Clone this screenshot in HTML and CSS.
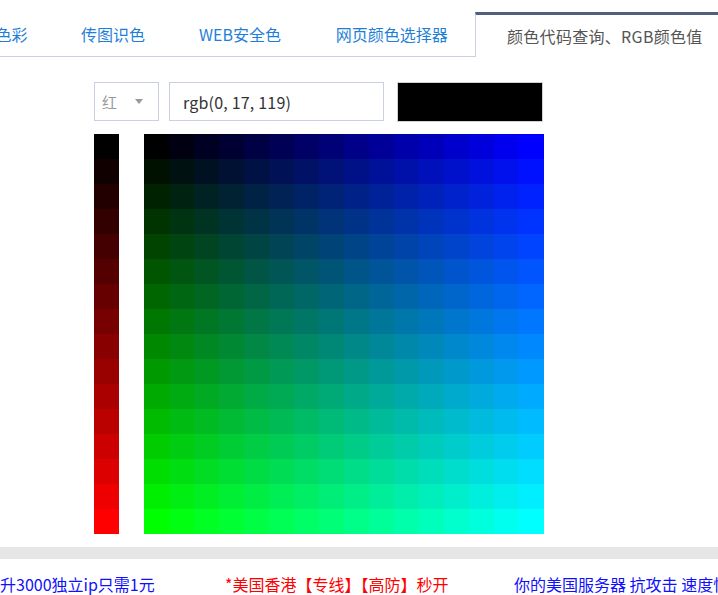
FILE: index.html
```html
<!DOCTYPE html>
<html lang="zh-CN">
<head>
<meta charset="utf-8">
<title>颜色代码查询、RGB颜色值</title>
<link rel="stylesheet" href="styles.css">
</head>
<body>
<div class="tabs">
  <div class="tab t1">色彩</div>
  <div class="tab t2">传图识色</div>
  <div class="tab t3">WEB安全色</div>
  <div class="tab t4">网页颜色选择器</div>
  <div class="tab active">颜色代码查询、RGB颜色值</div>
</div>
<div class="controls">
  <div class="select"><span>红</span><i class="arrow"></i></div>
  <input class="code" type="text" value="rgb(0, 17, 119)">
  <div class="preview"></div>
</div>
<div class="picker">
  <div class="bar" id="bar"></div>
  <div class="grid" id="grid"></div>
</div>
<div class="band"></div>
<div class="footer">
  <a class="ad blue">升3000独立ip只需1元</a>
  <a class="ad red">*美国香港【专线】【高防】秒开</a>
  <a class="ad blue">你的美国服务器 抗攻击 速度快</a>
</div>
<script src="script.js"></script>
</body>
</html>
```
FILE: styles.css
```css
html, body {
  margin: 0;
  padding: 0;
  overflow: hidden;
  background: #fff;
  font-family: "Noto Sans CJK SC", "Liberation Sans", sans-serif;
}
.tabs {
  display: flex;
  align-items: flex-end;
  height: 57px;
  box-sizing: border-box;
  border-bottom: 1px solid #c9d0e1;
  margin-left: -31.5px;
  white-space: nowrap;
}
.tab {
  flex: none;
  text-align: center;
  line-height: 44px;
  font-size: 16px;
  color: #1f7fd8;
}
.t1 { width: 86px; }
.t2 { width: 117px; }
.t3 { width: 137px; }
.t4 { width: 166.5px; }
.tab.active {
  margin-bottom: -1px;
  padding: 0 31px;
  line-height: 42px;
  text-align: left;
  letter-spacing: 0.3px;
  border-top: 3px solid #4f5f80;
  border-left: 1px solid #c9d0e1;
  background: #fff;
  color: #555;
}
.controls {
  display: flex;
  align-items: flex-start;
  margin-top: 25px;
  padding-left: 94px;
}
.select {
  box-sizing: border-box;
  width: 65px;
  height: 39px;
  border: 1px solid #c9d0e1;
  display: flex;
  align-items: center;
  padding-left: 7px;
  color: #999;
  font-size: 15px;
}
.arrow {
  width: 0;
  height: 0;
  border-left: 4px solid transparent;
  border-right: 4px solid transparent;
  border-top: 5px solid #999;
  margin-left: 18px;
}
.code {
  margin: 0 0 0 10px;
  box-sizing: border-box;
  width: 215px;
  height: 39px;
  border: 1px solid #c9d0e1;
  padding: 0 0 0 13px;
  font: 16px "Noto Sans CJK SC", "Liberation Sans", sans-serif;
  letter-spacing: 0.2px;
  color: #333;
  outline: none;
}
.preview {
  margin-left: 13px;
  box-sizing: border-box;
  width: 146px;
  height: 40px;
  background: #000;
  border: 1px solid #d0d0d0;
}
.picker {
  display: flex;
  gap: 25px;
  margin-top: 12px;
  padding-left: 94px;
}
.bar {
  display: grid;
  grid-template-rows: repeat(16, 25px);
  width: 25px;
}
.grid {
  display: grid;
  grid-template-columns: repeat(16, 25px);
  grid-auto-rows: 25px;
}
.band {
  margin-top: 13px;
  height: 12px;
  background: #e6e6e6;
}
.footer {
  display: grid;
  grid-template-columns: 225px 289px 1fr;
  margin-top: 13px;
  font-size: 16px;
  line-height: 24px;
  white-space: nowrap;
  overflow: hidden;
}
.ad.blue { color: #1010ff; }
.ad.red { color: #ff0000; }
```
FILE: script.js
```js
(function () {
  var grid = document.getElementById('grid');
  var bar = document.getElementById('bar');
  for (var r = 0; r < 16; r++) {
    var b = document.createElement('div');
    b.style.background = 'rgb(' + (r * 17) + ',0,0)';
    bar.appendChild(b);
    for (var c = 0; c < 16; c++) {
      var d = document.createElement('div');
      d.style.background = 'rgb(0,' + (r * 17) + ',' + (c * 17) + ')';
      grid.appendChild(d);
    }
  }
})();
```
